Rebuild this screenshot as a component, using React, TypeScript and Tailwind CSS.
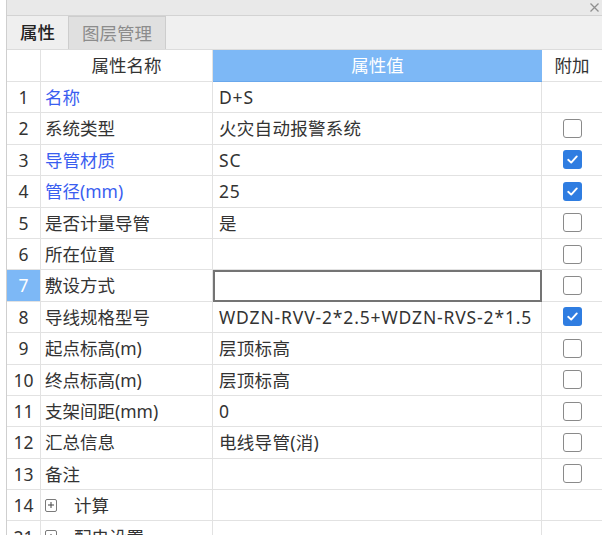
import React from 'react';

type Row = {
  no: number;
  name: string;
  value: string;
  blue?: boolean;
  check?: boolean | null;
  expand?: boolean;
};

const rows: Row[] = [
  { no: 1, name: '名称', value: 'D+S', blue: true, check: null },
  { no: 2, name: '系统类型', value: '火灾自动报警系统', check: false },
  { no: 3, name: '导管材质', value: 'SC', blue: true, check: true },
  { no: 4, name: '管径(mm)', value: '25', blue: true, check: true },
  { no: 5, name: '是否计量导管', value: '是', check: false },
  { no: 6, name: '所在位置', value: '', check: false },
  { no: 7, name: '敷设方式', value: '', check: false },
  { no: 8, name: '导线规格型号', value: 'WDZN-RVV-2*2.5+WDZN-RVS-2*1.5', check: true },
  { no: 9, name: '起点标高(m)', value: '层顶标高', check: false },
  { no: 10, name: '终点标高(m)', value: '层顶标高', check: false },
  { no: 11, name: '支架间距(mm)', value: '0', check: false },
  { no: 12, name: '汇总信息', value: '电线导管(消)', check: false },
  { no: 13, name: '备注', value: '', check: false },
  { no: 14, name: '计算', value: '', check: null, expand: true },
  { no: 21, name: '配电设置', value: '', check: null, expand: true },
];

// latin-only values get a bit more spacing, the source font runs wider
const isLatin = (s: string) => /^[\x20-\x7e]+$/.test(s);

const Checkbox: React.FC<{ checked: boolean }> = ({ checked }) =>
  checked ? (
    <div className="w-[19px] h-[19px] rounded-[3px] bg-[#2f7de1] flex items-center justify-center">
      <svg width="13" height="13" viewBox="0 0 13 13">
        <path d="M2.2 6.8 L5.2 9.6 L10.8 3.4" fill="none" stroke="#fff" strokeWidth="1.9" strokeLinecap="round" strokeLinejoin="round" />
      </svg>
    </div>
  ) : (
    <div className="w-[19px] h-[19px] rounded-[3px] border-[1.5px] border-[#8a8a8a] bg-white" />
  );

const PlusBox = () => (
  <span className="inline-flex w-[12px] h-[13px] border border-[#7a7a7a] rounded-[2px] items-center justify-center mr-[17px] bg-white">
    <svg width="8" height="8" viewBox="0 0 8 8">
      <path d="M4 1 V7 M1 4 H7" stroke="#444" strokeWidth="1" />
    </svg>
  </span>
);

const App: React.FC = () => {
  return (
    <div
      className="w-[602px] h-[535px] overflow-hidden bg-white flex text-[17.5px] text-[#333]"
      style={{ fontFamily: '"Noto Sans", "Noto Sans CJK SC", sans-serif' }}
    >
      <div className="w-[7px] shrink-0 bg-white border-r border-[#cfcfcf]" />
      <div className="flex-1 flex flex-col">
        <div className="h-[16px] shrink-0 bg-[#e9e9e9] border-b border-[#d3d3d3] flex justify-end items-center pr-[2px]">
          <svg width="11" height="11" viewBox="0 0 11 11">
            <path d="M1.5 1.5 L9.5 9.5 M9.5 1.5 L1.5 9.5" stroke="#8f8f8f" strokeWidth="1.3" />
          </svg>
        </div>
        <div className="h-[34px] shrink-0 bg-[#f0f0f0] flex items-end border-b border-[#dcdcdc]">
          <div className="w-[61px] h-[33px] flex items-center justify-center font-medium text-[#222] bg-[#efefef]">属性</div>
          <div className="w-[98px] h-[33px] flex items-center justify-center text-[#8c8c8c] bg-[#e0e0e0] border border-b-0 border-[#cdcdcd]">图层管理</div>
        </div>
        <div className="grid grid-cols-[34px_172px_329px_1fr]">
          <div className="h-[32px] border-b border-r border-[#e2e2e2]" />
          <div className="h-[32px] border-b border-r border-[#e2e2e2] flex items-center justify-center">属性名称</div>
          <div className="h-[32px] bg-[#7db8f6] border-b border-[#6aa8ec] flex items-center justify-center text-white">属性值</div>
          <div className="h-[32px] border-b border-[#e2e2e2] flex items-center justify-center">附加</div>
          {rows.map((r) => {
            const active = r.no === 7;
            return (
              <React.Fragment key={r.no}>
                <div
                  className={`h-[31.4px] border-b border-r border-[#e2e2e2] flex items-center justify-center ${
                    active ? 'bg-[#7db8f6] text-white' : ''
                  }`}
                >
                  {r.no}
                </div>
                <div
                  className={`h-[31.4px] border-b border-r border-[#e2e2e2] flex items-center pl-[4px] whitespace-nowrap ${
                    r.blue ? 'text-[#3a5ef0]' : ''
                  }`}
                >
                  {r.expand && <PlusBox />}
                  {r.name}
                </div>
                <div
                  className={`h-[31.4px] flex items-center pl-[6px] whitespace-nowrap ${
                    isLatin(r.value) ? 'tracking-[0.85px]' : 'tracking-[0.3px]'
                  } ${active ? 'border-[2.5px] border-[#747474]' : 'border-b border-r border-[#e2e2e2]'}`}
                >
                  {r.value}
                </div>
                <div className="h-[31.4px] border-b border-[#e2e2e2] flex items-center justify-center">
                  {r.check !== null && r.check !== undefined && <Checkbox checked={r.check} />}
                </div>
              </React.Fragment>
            );
          })}
        </div>
      </div>
    </div>
  );
};

export default App;
